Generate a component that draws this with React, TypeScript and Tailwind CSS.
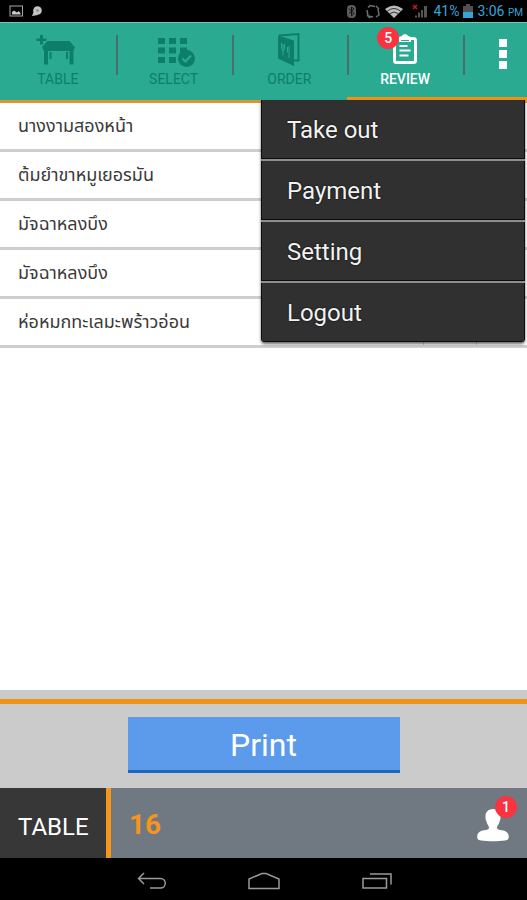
import React, { useState } from 'react';

interface Dish {
  id: number;
  name: string;
}

interface TabButtonProps {
  label: string;
  active?: boolean;
  badge?: number;
  onClick: () => void;
  children: React.ReactNode;
}

const dishes: Dish[] = [
  { id: 1, name: 'นางงามสองหน้า' },
  { id: 2, name: 'ต้มยำขาหมูเยอรมัน' },
  { id: 3, name: 'มัจฉาหลงบึง' },
  { id: 4, name: 'มัจฉาหลงบึง' },
  { id: 5, name: 'ห่อหมกทะเลมะพร้าวอ่อน' },
];

const menuItems = ['Take out', 'Payment', 'Setting', 'Logout'];

const TableIcon = () => (
  <svg width="48" height="36" viewBox="0 0 48 36" fill="currentColor" aria-hidden="true">
    <path d="M6 3h3v3.500h3.500v2.500H9v3.500H6V9H2.500V6.500H6z" />
    <path d="M13.500 9h22l5.500 6.500-2 3.500h-29L8 15z" />
    <path d="M10 18h4v14.500h-4zM35.500 18h4v14.500h-4zM15.500 20h2v7h-2zM32 20h2v7h-2z" />
  </svg>
);

const SelectIcon = () => (
  <svg width="48" height="36" viewBox="0 0 48 36" fill="currentColor" aria-hidden="true">
    <path d="M8 6h7v6H8zM19 6h7v6h-7zM30 6h7v6h-7zM8 15.500h7v6H8zM19 15.500h7v6h-7zM30 15.500h7v6h-7zM8 25h7v6H8zM19 25h7v6h-7z" />
    <circle cx="36.500" cy="26.500" r="8.500" />
    <path d="M32.500 26.500l3 3 5.500-6" fill="none" stroke="#2aaa91" strokeWidth="2" />
  </svg>
);

const OrderIcon = () => (
  <svg width="48" height="36" viewBox="0 0 48 36" fill="none" stroke="currentColor" aria-hidden="true">
    <path d="M14 3.500L33.500 2v26.500H29" strokeWidth="2" />
    <path d="M13 3.500l16 5v25.500l-16-7.500z" fill="currentColor" stroke="none" />
    <path d="M16.500 11v5.500c0 2 3 2.500 3 .5v-5M18 12v11.500M24 14v12M22.500 15v5.500" stroke="#2aaa91" strokeWidth="1" />
  </svg>
);

const ReviewIcon = () => (
  <svg width="48" height="36" viewBox="0 0 48 36" fill="none" stroke="currentColor" aria-hidden="true">
    <rect x="13.500" y="6.500" width="21" height="24" rx="2" strokeWidth="3" />
    <path d="M18 10V5l3-1c.5-2.500 5.500-2.500 6 0l3 1v5z" fill="currentColor" stroke="none" />
    <path d="M20 8.500h8" stroke="#2aaa91" strokeWidth="1" />
    <path d="M18.500 14h8M18.500 18.500h11M18.500 23.500h9" strokeWidth="2" />
  </svg>
);

const Badge = ({ count }: { count: number }) => (
  <span className="flex size-[22px] items-center justify-center rounded-full bg-[#f9333f] text-sm font-medium text-white">
    {count}
  </span>
);

const TabButton: React.FC<TabButtonProps> = ({ label, active, badge, onClick, children }) => (
  <button
    onClick={onClick}
    className={`relative flex flex-1 flex-col items-center gap-[3px] pt-[9px] text-sm leading-4 ${
      active
        ? 'border-b-[3px] border-[#ee9314] font-medium text-white'
        : 'border-b-[3px] border-transparent text-[#0d7f69]'
    }`}
  >
    {children}
    <span>{label}</span>
    {badge && (
      <span className="absolute left-1/2 top-1 -ml-7">
        <Badge count={badge} />
      </span>
    )}
  </button>
);

const Separator = () => <span className="-mr-0.5 mt-3 h-10 w-0.5 bg-[#4a6f6a]" />;

const StatusBar = () => (
  <div className="flex h-[22px] items-center justify-between bg-black pl-[9px] pr-1 text-[#33a5d6]">
    <div className="flex items-center gap-2">
      <svg width="15" height="12" viewBox="0 0 15 12" aria-hidden="true">
        <rect x="1" y="1" width="12.500" height="10" fill="none" stroke="#a8a8a8" />
        <path d="M3 9.500V7l2-1.500 3 2L9.500 6l2 2v1.500z" fill="#c8c8c8" />
      </svg>
      <svg width="13" height="12" viewBox="0 0 13 12" aria-hidden="true">
        <circle cx="5.500" cy="5.500" r="4.300" fill="#c4c4c4" />
        <path d="M0 11l2-5 4 4z" fill="#c4c4c4" />
        <circle cx="5.500" cy="5.500" r="1.300" fill="#888" />
      </svg>
    </div>
    <div className="flex items-center gap-1">
      <svg width="66" height="16" viewBox="0 0 66 16" fill="none" aria-hidden="true">
        <rect x="5" y="2" width="9" height="13" rx="4" fill="#5c5c5c" />
        <path d="M7 5.500l5 5-2.500 2.300V4l2.500 2-5 4.500" stroke="#111" />
        <path d="M26 4.500l2-2 5 1M36 6l1 6-3 2M31 14l-5-1-1-6M34 3l3 3M25 12l3 3" stroke="#707070" strokeWidth="1.500" />
        <path d="M43 6q9-7 18 0l-9 9z" fill="#bdbdbd" />
        <path d="M45.500 8q6.500-5 13 0M48 10.500q4-3 8 0" stroke="#333" strokeWidth="1" />
      </svg>
      <svg width="17" height="16" viewBox="0 0 17 16" aria-hidden="true">
        <path d="M3 14.500v-2h2v2zM6 14.500v-5h2v5zM9 14.500V7h2v7.500zM12 14.500V3h3v11.500z" fill="#555" />
        <path d="M1 2l4 4M5 2L1 6" stroke="#d01818" strokeWidth="1.500" />
      </svg>
      <span className="text-sm leading-5">41%</span>
      <svg width="10" height="14" viewBox="0 0 10 14" aria-hidden="true">
        <path d="M3 0h4v2h3v12H0V2h3z" fill="#505050" />
        <path d="M0 8h10v6H0z" fill="#33a5d6" />
      </svg>
      <span className="text-sm leading-5">
        3:06 <span className="text-[10px] leading-none">PM</span>
      </span>
    </div>
  </div>
);

const OptionsMenu = ({ onSelect }: { onSelect: (item: string) => void }) => (
  <ul className="absolute right-[2px] top-[78px] z-10 w-[264px] overflow-hidden rounded-b-sm bg-[#303030] shadow-[0_2px_3px_rgba(0,0,0,0.6)]">
    {menuItems.map((item) => (
      <li key={item} className="border-b-2 border-[#8e8e8e] last:border-b-0">
        <button
          onClick={() => onSelect(item)}
          className="h-[59px] w-full border border-t-0 border-[#0c0c0c] pl-[25px] pt-0.5 text-left text-2xl text-[#f2f2f2] [text-shadow:0_0_2px_#000]"
        >
          {item}
        </button>
      </li>
    ))}
  </ul>
);

export default function App() {
  const [activeTab, setActiveTab] = useState('REVIEW');
  const [menuOpen, setMenuOpen] = useState(true);

  return (
    <div className="flex min-h-screen flex-col bg-white font-['Roboto','Noto_Sans_Thai','Noto_Sans',sans-serif]">
      <StatusBar />

      <header className="relative border-b-[3px] border-[#dd9730] bg-[#2aaa91]">
        <nav className="flex h-[78px] border-t border-[#7cc4b4]">
          <TabButton label="TABLE" active={activeTab === 'TABLE'} onClick={() => setActiveTab('TABLE')}>
            <TableIcon />
          </TabButton>
          <Separator />
          <TabButton label="SELECT" active={activeTab === 'SELECT'} onClick={() => setActiveTab('SELECT')}>
            <SelectIcon />
          </TabButton>
          <Separator />
          <TabButton label="ORDER" active={activeTab === 'ORDER'} onClick={() => setActiveTab('ORDER')}>
            <OrderIcon />
          </TabButton>
          <Separator />
          <TabButton label="REVIEW" badge={5} active={activeTab === 'REVIEW'} onClick={() => setActiveTab('REVIEW')}>
            <ReviewIcon />
          </TabButton>
          <Separator />
          <button
            aria-label="More options"
            onClick={() => setMenuOpen(!menuOpen)}
            className="flex w-16 flex-col items-center gap-[3px] border-b-[3px] border-[#ee9314] pl-4 pt-4"
          >
            <span className="size-2 bg-white" />
            <span className="size-2 bg-white" />
            <span className="size-2 bg-white" />
          </button>
        </nav>
        {menuOpen && <OptionsMenu onSelect={() => setMenuOpen(false)} />}
      </header>

      <main className="flex-1">
        <table className="w-full border-separate border-spacing-0">
          <tbody>
            {dishes.map((dish) => (
              <tr key={dish.id}>
                <td className="h-[49px] border-b-[3px] border-[#cecece] pl-[18px] text-lg leading-6 text-[#3a3a3a]">
                  {dish.name}
                </td>
                <td className="w-[53px] border-b-[3px] border-l border-[#cecece]" />
                <td className="w-[51px] border-b-[3px] border-l border-[#cecece]" />
              </tr>
            ))}
          </tbody>
        </table>
      </main>

      <footer>
        <div className="border-b-[5px] border-[#ee9314] bg-[#cacaca] pt-[9px]" />
        <div className="flex justify-center bg-[#cbcbcb] pb-[15px] pt-[13px]">
          <button className="h-14 w-[272px] border-b-[3px] border-[#1c68bd] bg-[#5c9aeb] pt-0.5 text-[32px] text-white">
            Print
          </button>
        </div>
        <div className="flex h-[70px] bg-[#707882]">
          <div className="flex w-[111px] items-center border-r-[5px] border-[#f5951b] bg-[#373737] pl-[18px] pt-2 text-2xl text-white">
            TABLE
          </div>
          <div className="flex flex-1 items-center justify-between px-[18px] pt-1">
            <span className="text-[28px] font-bold text-[#f5951b]">16</span>
            <button aria-label="Customers" className="relative text-white">
              <svg width="32" height="34" viewBox="0 0 32 34" fill="currentColor" aria-hidden="true">
                <path d="M16 1c5 0 8 3.500 7.500 8.500 0 2-.5 3-1 4-.5 3-2 4-2.500 5.500 0 2 .5 2.500 3 3 5 .5 8.500 2 8.700 6 .2 3-.7 4-3.700 4.500-7 1-17 1-24 0-3-.5-4-1.500-3.700-4.500.2-4 3.700-5.500 8.700-6 2.500-.5 3-1 3-3-.5-1.500-2-2.500-2.500-5.500-.5-1-1-2-1-4C8 4.500 11 1 16 1z" />
              </svg>
              <span className="absolute -right-2 -top-3">
                <Badge count={1} />
              </span>
            </button>
          </div>
        </div>
        <div className="flex h-[42px] items-center justify-center gap-20 bg-black pt-1 text-[#9a9a9a]">
          <button aria-label="Back">
            <svg width="32" height="20" viewBox="0 0 32 20" fill="none" stroke="currentColor" strokeWidth="1.500">
              <path d="M8 2L2.500 7.500 8 13M2.500 7.500H24.500a4.500 4.500 0 0 1 0 9.500H14" />
            </svg>
          </button>
          <button aria-label="Home">
            <svg width="32" height="20" viewBox="0 0 32 20" fill="none" stroke="currentColor" strokeWidth="1.500">
              <path d="M1 17.500V8l13-5.500h4L31 8v9.500z" />
            </svg>
          </button>
          <button aria-label="Recent apps">
            <svg width="32" height="20" viewBox="0 0 32 20" fill="none" stroke="currentColor" strokeWidth="1.500">
              <path d="M3 7.500h23.500v9.500H3zM10 3h21v10.500" />
            </svg>
          </button>
        </div>
      </footer>
    </div>
  );
}
